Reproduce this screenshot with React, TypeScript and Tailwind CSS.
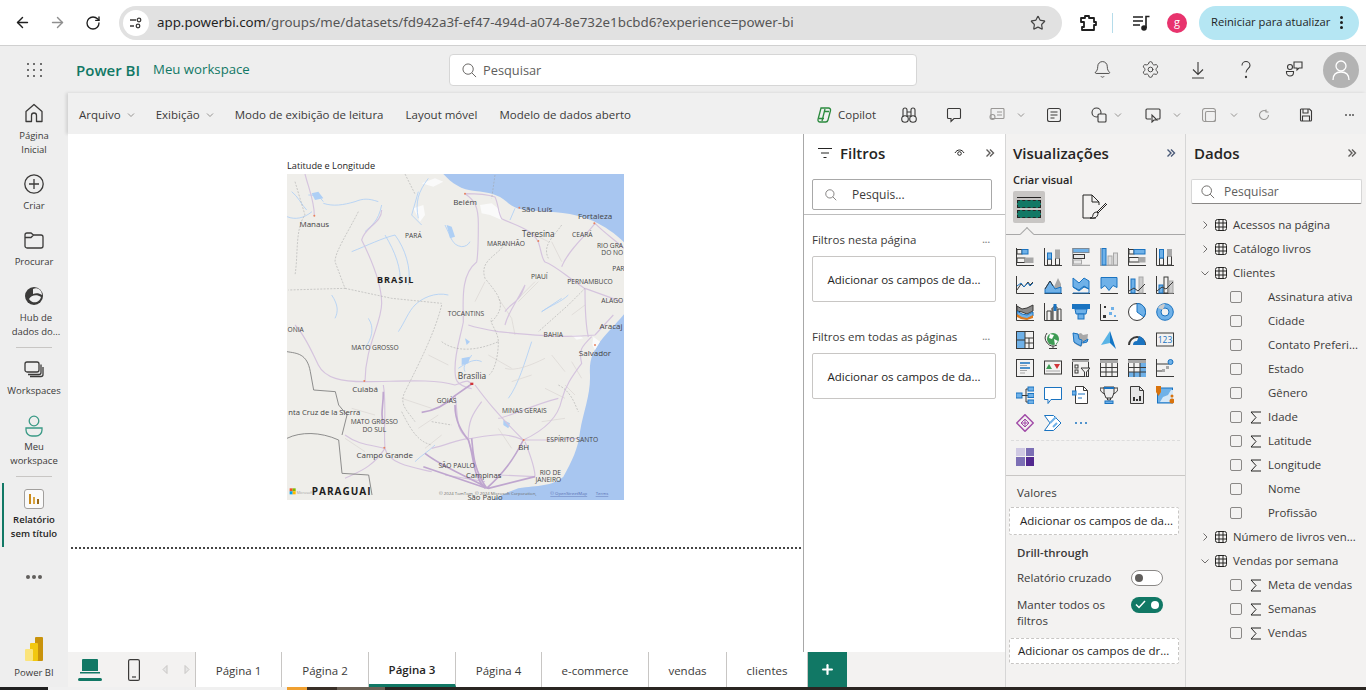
import type { ReactNode } from 'react';
import { ArrowLeft, ArrowRight, RotateCw, Star, Bell, Settings, Plus } from 'lucide-react';

const FONT = "[font-family:'Open_Sans','Noto_Sans',sans-serif]";
const B = '#1a73c0';
const L = '#6fb1e8';
const G = '#a8a8a8';
const D = '#3b3a39';

const Axis = () => <path d="M.5 0v17.5H18" fill="none" stroke={D} />;

function V({ children }: { children: ReactNode }) {
    return (
        <svg width="18" height="18" viewBox="0 0 18 18" fill="none" strokeWidth="1">
            {children}
        </svg>
    );
}

// visual gallery, row by row
const vizIcons: ReactNode[] = [
    <><Axis /><rect x="1" y="1.5" width="5" height="4.5" stroke={D} /><rect x="6" y="1.5" width="6" height="4.5" fill={L} stroke={B} /><rect x="1" y="10" width="8" height="4.5" stroke={D} /><rect x="9" y="10" width="8" height="4.5" fill={G} stroke={G} /></>,
    <><Axis /><rect x="3.5" y="11" width="4" height="6" stroke={D} /><rect x="3.5" y="5" width="4" height="6" fill={L} stroke={B} /><rect x="11.5" y="10" width="4" height="7" stroke={D} /><rect x="11.5" y="2" width="4" height="8" fill={G} stroke={G} /></>,
    <><path d="M.5 0v17.5H18" stroke={G} strokeWidth="1.5" /><rect x="1" y=".5" width="16" height="4" fill={L} stroke="#7d8a96" /><rect x="1.5" y="6.5" width="11" height="4" fill="#e8e8e8" stroke={D} /><rect x="1.5" y="12" width="8" height="4" fill="#e8e8e8" stroke={G} /></>,
    <><path d="M.5 0v17.5H18" stroke={G} strokeWidth="1.5" /><rect x="2" y=".5" width="4" height="16.5" fill={L} stroke={B} /><rect x="8" y="8" width="4" height="9" fill="#ddd" stroke={G} /><rect x="13.5" y="5" width="4" height="12" fill="#ddd" stroke={G} /></>,
    <><Axis /><rect x="1" y="1.5" width="5" height="4.5" stroke={D} /><rect x="6" y="1.5" width="11" height="4.5" fill={L} stroke={B} /><rect x="1" y="9.5" width="10" height="4.5" stroke={D} /><rect x="11" y="9.5" width="6" height="4.5" fill={G} stroke={G} /></>,
    <><Axis /><rect x="3.5" y="10" width="4" height="7" stroke={D} /><rect x="3.5" y="1.5" width="4" height="8.5" fill={L} stroke={B} /><rect x="11.5" y="8" width="4" height="9" stroke={D} /><rect x="11.5" y="1.5" width="4" height="6.5" fill={G} stroke={G} /></>,

    <><Axis /><path d="M1 14l4-6 3 3 4-5 2 3 3-3" stroke={D} /><path d="M1 10l4-3 3 4 4-4 2 3 3-3" stroke={B} /></>,
    <><path d="M.5 17.5H18" stroke={D} /><path d="M1 17l5-11 4 5 4-9 3 6v9z" fill={G} /><path d="M1 13l5-8 5 8 6-2v6H1z" fill={L} stroke={B} /><path d="M1 13l5-8 3 5" stroke={D} /></>,
    <><path d="M.5 17.5H18" stroke={D} /><path d="M1 2l6 5 5-5 5 3v8l-5-2-5 4-6-4z" fill={L} stroke={B} /><path d="M1 11l6 3 5-4 5 3v4H1" stroke={B} /></>,
    <><path d="M.5 17.5H18" stroke={D} /><path d="M1 1.5h16v10l-4-2-4 5-4-5-4 3z" fill={L} stroke={B} /></>,
    <><Axis /><rect x="3" y="3" width="4" height="14" fill={L} stroke={B} /><rect x="11" y="1" width="4" height="16" fill="#ccc" stroke={G} /><path d="M1 15l5-3 4 3 7-7" stroke={D} /></>,
    <><Axis /><rect x="3" y="9" width="4" height="8" fill={L} stroke={B} /><rect x="8" y="1" width="4" height="16" stroke={D} /><rect x="13" y="5" width="4" height="12" fill="#ccc" stroke={G} /><path d="M1 15l5-4 4 2 7-7" stroke={D} /></>,

    <><path d="M1 3l5 3 5-1 6-3v6l-6 3-5-2-5-1z" fill="#8a8a8a" stroke={D} /><path d="M1 8l5 3 5 1 6-3v4l-6 3-6-1-4-3z" fill={L} stroke={B} /><path d="M1 11l5 3 5 1 6-3v3l-6 2-6-1-4-2z" fill="#de7a1d" /><path d="M.5 1v16.5H18" stroke={D} /></>,
    <><path d="M.5 0v17.5H18" stroke={D} /><path d="M3 17V8h4v9M8 17V5h0M9 17V4h4v13M14 17V6h3v11" stroke={D} /><rect x="9.5" y="1" width="3" height="7" fill={B} /></>,
    <><path d="M0 1h18v5H0z" fill="#1a73c0" /><path d="M3 6h12l-1 5H4z" fill={L} stroke={B} /><rect x="6" y="11" width="6" height="5" fill={L} stroke={B} /></>,
    <><path d="M.5 1v16.5H18" stroke={D} /><rect x="3" y="12" width="3" height="3" fill="#333" /><rect x="9" y="9" width="3" height="3" fill={L} /><rect x="11" y="4" width="3" height="3" fill={L} /><rect x="14" y="12" width="2" height="2" fill={L} /><rect x="4" y="3" width="2" height="2" fill="#333" /></>,
    <><circle cx="9" cy="9" r="8.5" fill="#fff" stroke={D} /><path d="M9 .5A8.5 8.5 0 0 1 16 14L9 9z" fill={L} stroke={B} /></>,
    <><circle cx="9" cy="9" r="8.3" fill={L} stroke={B} /><circle cx="9" cy="9" r="4" fill="#f3f2f1" stroke={B} /><path d="M9 1a8 8 0 0 0-7 4l5 2" fill="#ccc" /></>,

    <><rect x=".5" y=".5" width="17" height="17" stroke={D} /><rect x="1" y="1" width="8" height="16" fill={L} /><path d="M9 .5v17M9 7h9M13 7v11M9 12h9M1 9h8" stroke={D} /></>,
    <><circle cx="9" cy="8" r="6" fill="#3e9b54" /><path d="M6 3l4 1-2 4-3-1zM10 8l4 2-3 4z" fill="#fff" /><path d="M3 2a8 8 0 0 0 10 12M9 15v2M5 17.5h8" stroke={D} /></>,
    <><path d="M1 2l5 1 3-1 2 2 5-1-1 8-4 1-2 4-4-2-3-2z" fill={G} /><path d="M1 2l5 1 1 5 3 1-1 6-4-2-3-2z" fill={L} stroke={B} /><path d="M11 11l5-3-1 3-4 1z" fill={L} stroke={B} /></>,
    <><path d="M10 0l6 18-6-6z" fill="#1477c6" /><path d="M10 0L1 14l9-2z" fill="#5ab4e6" /></>,
    <><path d="M1 14a8 8 0 0 1 16 0" stroke={D} strokeWidth="2" /><path d="M5 14a4 4 0 0 1 4-4l2-5a8 8 0 0 1 6 9" fill={B} /></>,
    <><rect x=".5" y="2" width="17" height="13" stroke={D} /><text x="9" y="12" textAnchor="middle" fontSize="8.5" fontFamily="'Open Sans',sans-serif" fill={B}>123</text></>,

    <><rect x=".5" y=".5" width="17" height="17" stroke={D} /><path d="M4 4h10M4 9h10" stroke={B} strokeWidth="1.5" /><path d="M4 6.5h7M4 11.5h7M4 14h5" stroke={G} /></>,
    <><rect x=".5" y="2" width="17" height="13" stroke={D} /><path d="M5 5l3 5H2z" fill="#3e9b54" /><path d="M10 5h6l-3 5z" fill="#d13438" /><path d="M2 12h14" stroke={G} /></>,
    <><rect x=".5" y=".5" width="16" height="17" stroke={D} /><path d="M0 1h17v2H0z" fill={G} /><rect x="3" y="6" width="3" height="3" stroke={D} /><rect x="3" y="11" width="3" height="3" stroke={D} /><path d="M9 9h9l-3.5 4v5h-2v-5z" fill="#f3f2f1" stroke={D} /></>,
    <><rect x=".5" y=".5" width="17" height="17" stroke={D} /><path d="M0 1h18v3H0z" fill={G} /><path d="M6 4v14M12 4v14M1 8.5h17M1 13h17" stroke={D} /></>,
    <><rect x=".5" y=".5" width="17" height="17" stroke={D} /><path d="M0 1h18v3H0z" fill={G} /><rect x="12" y="4" width="6" height="14" fill={L} /><rect x="1" y="13" width="17" height="5" fill={L} /><path d="M6 4v14M12 4v14M1 8.5h17M1 13h17" stroke={D} /></>,
    <><path d="M.5 0v18M.5 5H13M.5 12H9M.5 17.5H18" stroke={D} /><circle cx="14.5" cy="3" r="2.5" fill={L} stroke={B} /><rect x="10" y="7" width="3" height="3" fill={G} /><rect x="6" y="10" width="3" height="3" fill={G} /></>,

    <><rect x="0" y="7" width="6" height="5" fill={L} stroke={B} /><path d="M6 9.5h4M10 3v13M10 3h2M10 9.5h2M10 16h2" stroke={D} /><rect x="12" y="1" width="6" height="4" fill={L} stroke={B} /><rect x="12" y="7.5" width="6" height="4" fill={L} stroke={B} /><rect x="12" y="14" width="6" height="4" fill={L} stroke={B} /></>,
    <><path d="M.5 1.500h17v12H7l-3 4v-4H.5z" fill="#fff" stroke={B} /></>,
    <><path d="M3.500.5h8l4 4v13h-12z" fill="#fff" stroke={D} /><path d="M11.500.5v4h4" stroke={D} /><rect x="0" y="5" width="4" height="4" fill={L} stroke={B} /><path d="M6 8h7" stroke={B} /><path d="M6 12h4" stroke={B} /></>,
    <><path d="M4 1h10v6l-2 5H6L4 7z" fill="#eee" stroke={D} /><path d="M4 2H0c0 3 2 5 5 6M14 2h4c0 3-2 5-5 6" stroke={D} /><path d="M4 1h10v2H4z" fill={B} /><path d="M7.500 12v2h3v-2" stroke={D} /><rect x="5" y="15" width="8" height="2.500" fill={L} stroke={B} /></>,
    <><path d="M2.500.5h9l4 4v13h-13z" fill="#e6e6e6" stroke={D} /><path d="M11.500.5v4h4" stroke={D} /><path d="M5 11h2v4H5zM8 13h2v2H8zM11 10h2v5h-2z" fill="#333" /></>,
    <><rect x="1.500" y="2" width="15" height="15" fill={L} stroke={B} /><path d="M4 16l3-5 5-2 3-5h2v12z" fill="#d4e7f7" /><path d="M0 0h5v6l-2.500 4L0 6z" fill="#d9730d" /><circle cx="16" cy="10" r="1.500" fill="#d9730d" /><circle cx="16" cy="15" r="2.500" fill="#d9730d" /></>,

    <><path d="M9 .7L17.300 9 9 17.300.7 9z" fill="none" stroke="#a14ba8" strokeWidth="1.500" /><path d="M5 9l4-4 4 4-4 4zM9 5v8M5 9h8" stroke="#a14ba8" /></>,
    <><path d="M.5 1.500h9l7.500 7.500-7.500 7.500h-9L6 9z" fill="#fff" stroke={B} /><path d="M6 9l6-6M9 13l4-4" stroke={L} strokeWidth="2" /></>,
    <><circle cx="4" cy="9" r="1" fill={B} /><circle cx="9" cy="9" r="1" fill={B} /><circle cx="14" cy="9" r="1" fill={B} /></>,
];

function Chevrons({ color = '#605e5c' }: { color?: string }) {
    return (
        <svg width="10" height="10" viewBox="0 0 10 10" fill="none" stroke={color} strokeWidth="1.400">
            <path d="M1.500 1.500L5 5 1.500 8.500M5 1.500L8.500 5 5 8.500" />
        </svg>
    );
}

function Caret({ className = '' }: { className?: string }) {
    return (
        <svg width="8" height="8" viewBox="0 0 8 8" fill="none" stroke="#8a8886" strokeWidth="0.900" className={className}>
            <path d="M1 2.500L4 5.500 7 2.500" />
        </svg>
    );
}

function SearchGlyph({ size = 16 }: { size?: number }) {
    return (
        <svg width={size} height={size} viewBox="0 0 16 16" fill="none" stroke="#605e5c" strokeWidth="1">
            <circle cx="6.500" cy="6.500" r="5.500" />
            <path d="M10.500 10.500L15 15" />
        </svg>
    );
}

function TableGlyph() {
    return (
        <svg width="12" height="12" viewBox="0 0 12 12" fill="none" stroke="#252423" strokeWidth="1">
            <rect x=".5" y=".5" width="11" height="11" rx="2" />
            <path d="M4 .5v11M8 .5v11M.5 4h11M.5 8h11" />
        </svg>
    );
}

function SigmaGlyph() {
    return (
        <svg width="12" height="13" viewBox="0 0 12 13" fill="none" stroke="#252423" strokeWidth="1">
            <path d="M11 1H1l5 5.500L1 12h10" />
        </svg>
    );
}

function RailItem({ icon, lines, active, h, labelClass = 'mt-[3px]' }: { icon: ReactNode; lines: string[]; active?: boolean; h: number; labelClass?: string }) {
    return (
        <div
            className={`relative flex flex-col items-center ${active ? 'font-semibold text-[#252423]' : 'text-[#3b3a39]'}`}
            style={{ height: h }}
        >
            {active && <div className="absolute left-[2px] top-[-4px] bottom-[7px] w-[2px] bg-[#117865]" />}
            <div className="flex h-[24px] items-center justify-center">{icon}</div>
            <div className={`text-center text-[9.500px] leading-[14px] ${labelClass}`}>
                {lines.map((l) => (
                    <div key={l} className="whitespace-nowrap">{l}</div>
                ))}
            </div>
        </div>
    );
}

function LeftRail() {
    const s = { fill: 'none', stroke: '#3b3a39', strokeWidth: 1.300 };
    return (
        <div className="flex w-[68px] shrink-0 flex-col bg-[#eeeeee] pt-[8px]">
            <RailItem h={71} labelClass="mt-[4px]" lines={['Página', 'Inicial']} icon={
                <svg width="20" height="20" viewBox="0 0 20 20" {...s}><path d="M2 8.500L10 1.500l8 7v10h-5.500v-6a2.500 2.500 0 0 0-5 0v6H2z" strokeLinejoin="round" /></svg>
            } />
            <RailItem h={56} lines={['Criar']} icon={
                <svg width="20" height="20" viewBox="0 0 20 20" {...s}><circle cx="10" cy="10" r="9.200" /><path d="M10 5v10M5 10h10" /></svg>
            } />
            <RailItem h={56} lines={['Procurar']} icon={
                <svg width="20" height="20" viewBox="0 0 20 20" {...s}><path d="M1 5a2 2 0 0 1 2-2h4l2.500 2H17a2 2 0 0 1 2 2v9a2 2 0 0 1-2 2H3a2 2 0 0 1-2-2zM1 7.500h6L9.500 5" /></svg>
            } />
            <RailItem h={63} labelClass="mt-[3px] pl-[4px]" lines={['Hub de', 'dados do...']} icon={
                <svg width="20" height="20" viewBox="0 0 20 20"><circle cx="10" cy="10" r="9" fill="#3b3a39" /><path d="M9 3c4-2 9 1 9 6-3-2-6-2-9-1zM5 13c2-4 8-5 12-2-1 5-8 8-12 2z" fill="#eeeeee" /></svg>
            } />
            <div className="mx-auto mb-[9px] h-px w-[36px] bg-[#c8c6c4]" />
            <RailItem h={57} lines={['Workspaces']} icon={
                <svg width="20" height="20" viewBox="0 0 20 20" {...s}><rect x="1" y="3" width="14" height="10" rx="2" /><path d="M17 5.500v8a2 2 0 0 1-2 2H4M19 8v7.500a2 2 0 0 1-2 2H6" /></svg>
            } />
            <RailItem h={62} labelClass="mt-[2px]" lines={['Meu', 'workspace']} icon={
                <svg width="18" height="22" viewBox="0 0 18 22" fill="none" stroke="#3a9a86" strokeWidth="1.300"><circle cx="9" cy="6" r="4.800" /><path d="M1 13h16v2a6 6 0 0 1-6 6H7a6 6 0 0 1-6-6z" /></svg>
            } />
            <div className="mx-auto mb-[10px] h-px w-[36px] bg-[#c8c6c4]" />
            <RailItem h={67} active labelClass="mt-[2px]" lines={['Relatório', 'sem título']} icon={
                <svg width="20" height="20" viewBox="0 0 20 20"><rect x=".5" y=".5" width="19" height="19" rx="2.500" fill="#fafafa" stroke="#a19f9d" /><path d="M5 5h2v10H5z" fill="#c98a1a" /><path d="M9 8h2v7H9z" fill="#d9a441" /><path d="M13 10h2v5h-2z" fill="#9a6a15" /></svg>
            } />
            <div className="mt-[21px] flex justify-center gap-[2px]">
                <span className="h-[4px] w-[4px] rounded-full bg-[#605e5c]" />
                <span className="h-[4px] w-[4px] rounded-full bg-[#605e5c]" />
                <span className="h-[4px] w-[4px] rounded-full bg-[#605e5c]" />
            </div>
            <div className="mt-auto flex flex-col items-center pb-[7px]">
                <svg width="18" height="24" viewBox="0 0 18 24">
                    <rect x="10" y="0" width="8" height="24" rx="1" fill="#c9930c" />
                    <rect x="5" y="6" width="8" height="18" rx="1" fill="#f2c811" />
                    <rect x="0" y="12" width="8" height="12" rx="1" fill="#fbe47c" />
                </svg>
                <span className="mt-[5px] text-[9.500px] leading-[14px] text-[#3b3a39]">Power BI</span>
            </div>
        </div>
    );
}

function ChromeBar() {
    return (
        <div className="flex h-[46px] shrink-0 items-center border-b border-[#d0d0d0] bg-white">
            <ArrowLeft size={17} strokeWidth={2} className="ml-[14px] text-[#1f1f1f]" />
            <ArrowRight size={17} strokeWidth={2} className="ml-[18px] text-[#8f8f8f]" />
            <RotateCw size={16} strokeWidth={2} className="ml-[19px] text-[#1f1f1f]" />
            <div className="ml-[18px] flex h-[34px] w-[943px] shrink-0 items-center rounded-full bg-[#e1e1e1]">
                <div className="ml-[4px] flex h-[26px] w-[26px] items-center justify-center rounded-full bg-white">
                    <svg width="14" height="14" viewBox="0 0 14 14" fill="none" stroke="#3b3a39" strokeWidth="1.300">
                        <path d="M1 4h6M1 10h4" />
                        <circle cx="10" cy="4" r="1.800" />
                        <circle cx="9" cy="10" r="1.800" />
                    </svg>
                </div>
                <span className="ml-[8px] whitespace-nowrap text-[13.330px] text-[#555] [font-family:'Noto_Sans',sans-serif]">
                    <span className="text-[#1f1f1f]">app.powerbi.com</span>/groups/me/datasets/fd942a3f-ef47-494d-a074-8e732e1bcbd6?experience=power-bi
                </span>
                <Star size={16} strokeWidth={1.800} className="ml-auto mr-[16px] text-[#444]" />
            </div>
            <svg width="18" height="18" viewBox="0 0 18 18" fill="none" stroke="#1f1f1f" strokeWidth="1.800" className="ml-[17px]">
                <path d="M2 4h4V2h4v2h5v4h2v3h-2v5H3v-3h2V8H2z" strokeLinejoin="round" />
            </svg>
            <div className="ml-[15px] h-[20px] w-px bg-[#b5dcea]" />
            <svg width="17" height="16" viewBox="0 0 17 16" fill="none" stroke="#1f1f1f" strokeWidth="1.600" className="ml-[20px]">
                <path d="M0 2h10M0 6h10M0 10h7" />
                <path d="M13 13V1.500h3.500" />
                <circle cx="11" cy="13" r="2" fill="#1f1f1f" />
            </svg>
            <div className="ml-[17px] flex h-[20px] w-[20px] items-center justify-center rounded-full bg-[#e8336d] text-[11px] text-white">g</div>
            <div className="ml-[12px] flex h-[34px] w-[160px] items-center rounded-full bg-[#b5e6f3] pl-[12px]">
                <span className="whitespace-nowrap text-[11.200px] text-[#1f1f1f]">Reiniciar para atualizar</span>
                <span className="ml-[10px] flex flex-col gap-[2px]">
                    <i className="h-[3px] w-[3px] rounded-full bg-[#1f1f1f]" />
                    <i className="h-[3px] w-[3px] rounded-full bg-[#1f1f1f]" />
                    <i className="h-[3px] w-[3px] rounded-full bg-[#1f1f1f]" />
                </span>
            </div>
        </div>
    );
}

function AppHeader() {
    return (
        <div className="flex h-[47px] shrink-0 items-center bg-[#eeeeee]">
            <div className="ml-[27px] grid w-[15px] grid-cols-3 gap-[4px]">
                {Array.from({ length: 9 }).map((_, i) => (
                    <span key={i} className="h-[2px] w-[2px] rounded-full bg-[#444]" />
                ))}
            </div>
            <span className="ml-[34px] pt-[1px] text-[15px] font-semibold text-[#117865]">Power BI</span>
            <span className="ml-[13px] pt-[1px] text-[13.200px] text-[#117865]">Meu workspace</span>
            <div className="absolute left-[449px] top-[54px] flex h-[32px] w-[468px] items-center rounded-[4px] border border-[#d6d6d6] bg-white pl-[12px]">
                <SearchGlyph size={15} />
                <span className="ml-[6px] pt-[1px] text-[12.800px] text-[#605e5c]">Pesquisar</span>
            </div>
            <div className="ml-auto flex items-center text-[#3b3a39]">
                <Bell size={19} strokeWidth={1.100} />
                <Settings size={19} strokeWidth={1.100} className="ml-[29px]" />
                <svg width="18" height="18" viewBox="0 0 18 18" fill="none" stroke="#3b3a39" strokeWidth="1.100" className="ml-[29px]"><path d="M9 1v12M4 8.500L9 13.500l5-5M3 17h12" /></svg>
                <svg width="18" height="20" viewBox="0 0 18 20" fill="none" stroke="#3b3a39" strokeWidth="1.100" className="ml-[30px]"><path d="M5 5.500C5 3 7 1.500 9 1.500s4 1.500 4 4c0 3-4 3.500-4 7" /><circle cx="9" cy="17" r=".6" /></svg>
                <svg width="18" height="18" viewBox="0 0 18 18" fill="none" stroke="#3b3a39" strokeWidth="1.100" className="ml-[30px]"><circle cx="5" cy="6" r="2.500" /><path d="M1.500 10.500h7v1a3.500 3.500 0 0 1-7 0zM9 1h8v6h-3l-2 2V7H9z" /></svg>
                <div className="ml-[20px] mr-[7px] flex h-[36px] w-[36px] items-center justify-center rounded-full bg-[#b3b3b3]">
                    <svg width="18" height="22" viewBox="0 0 18 22" fill="none" stroke="#fff" strokeWidth="1.300"><circle cx="9" cy="7" r="5" /><path d="M1 21c0-5 3-8 8-8s8 3 8 8" /></svg>
                </div>
            </div>
        </div>
    );
}

function Toolbar() {
    const ic = { fill: 'none', stroke: '#3b3a39', strokeWidth: 1.100 };
    const gray = { fill: 'none', stroke: '#9a9896', strokeWidth: 1.100 };
    return (
        <div className="flex h-[41px] shrink-0 items-center bg-[#f0f0f0] pl-[11px] pt-[2px] text-[11.500px] text-[#3b3a39] shadow-[-2px_0_3px_rgba(0,0,0,0.12)]">
            <span>Arquivo</span>
            <Caret className="ml-[6px]" />
            <span className="ml-[21px]">Exibição</span>
            <Caret className="ml-[6px]" />
            <span className="ml-[21px]">Modo de exibição de leitura</span>
            <span className="ml-[22px]">Layout móvel</span>
            <span className="ml-[22px]">Modelo de dados aberto</span>
            <div className="ml-auto flex items-center pr-[12px]">
                <svg width="18" height="18" viewBox="0 0 18 18" fill="none" stroke="#2b8a3e" strokeWidth="1.300"><path d="M6 2h7.500a2 2 0 0 1 2 2.500L13 14a2.500 2.500 0 0 1-2.500 2H5a2 2 0 0 1-2-2.500L5.500 4z" /><path d="M9 5.500h5M4 12.500h5M10 3L7 15" /></svg>
                <span className="ml-[5px]">Copilot</span>
                <svg width="16" height="18" viewBox="0 0 16 18" {...ic} className="ml-[25px]"><path d="M2 11V4a2 2 0 0 1 4 0v7M10 11V4a2 2 0 0 1 4 0v7M6 6h4M6 10h4" /><circle cx="4" cy="13" r="3.300" /><circle cx="12" cy="13" r="3.300" /></svg>
                <svg width="16" height="16" viewBox="0 0 16 16" {...ic} className="ml-[29px]"><path d="M2.500 1.500h11a1 1 0 0 1 1 1v8a1 1 0 0 1-1 1H8L5 14.500v-3H2.500a1 1 0 0 1-1-1v-8a1 1 0 0 1 1-1z" /></svg>
                <svg width="16" height="14" viewBox="0 0 16 14" {...gray} className="ml-[27px]"><rect x="2" y=".5" width="13" height="10" rx="1" /><path d="M8 4h5M8 7h5" /><circle cx="3.500" cy="9" r="2.500" /></svg>
                <Caret className="ml-[12px]" />
                <svg width="14" height="16" viewBox="0 0 14 16" {...ic} className="ml-[22px]"><rect x=".5" y="1.500" width="13" height="13" rx="2" /><path d="M3.500 5h7M3.500 8h7M3.500 11h4" /></svg>
                <svg width="16" height="16" viewBox="0 0 16 16" {...ic} className="ml-[30px]"><circle cx="5.500" cy="5.500" r="4.500" /><rect x="7" y="7" width="8" height="8" rx="1" fill="#f0f0f0" /></svg>
                <Caret className="ml-[7px]" />
                <svg width="16" height="16" viewBox="0 0 16 16" {...ic} className="ml-[23px]"><path d="M6 12H2a1 1 0 0 1-1-1V3a1 1 0 0 1 1-1h12a1 1 0 0 1 1 1v8a1 1 0 0 1-1 1h-2" /><path d="M7 8v7l2-2h3z" /></svg>
                <Caret className="ml-[12px]" />
                <svg width="14" height="14" viewBox="0 0 14 14" {...gray} className="ml-[21px]"><rect x=".5" y=".5" width="13" height="13" rx="2.500" /><rect x="3.500" y="3.500" width="10" height="10" rx="1.500" /></svg>
                <Caret className="ml-[14px]" />
                <svg width="12" height="12" viewBox="0 0 12 12" {...gray} className="ml-[20px]"><path d="M10.500 6A4.500 4.500 0 1 1 8 2M8 .5V3h2.500" /></svg>
                <svg width="14" height="14" viewBox="0 0 14 14" {...ic} className="ml-[29px]"><path d="M1.500 1.500a1 1 0 0 1 1-.5h8l2 2v9a1 1 0 0 1-1 1h-9a1 1 0 0 1-1-1zM4 1v4h5V1M3.500 13V8h7v5" /></svg>
                <span className="ml-[32px] flex gap-[1.500px]">
                    <i className="h-[2px] w-[2px] rounded-full bg-[#555]" />
                    <i className="h-[2px] w-[2px] rounded-full bg-[#555]" />
                    <i className="h-[2px] w-[2px] rounded-full bg-[#555]" />
                </span>
            </div>
        </div>
    );
}

// map tile: labels stay real text, the rest is drawn
function MapVisual() {
    const road = { fill: 'none', stroke: '#d5c4de', strokeWidth: 3.500, strokeLinejoin: 'round' as const };
    const major = { fill: 'none', stroke: '#bfa6cf', strokeWidth: 5, strokeLinejoin: 'round' as const };
    const minor = { fill: 'none', stroke: '#d9d4d2', strokeWidth: 2 };
    const river = { fill: 'none', stroke: '#aecff5', strokeWidth: 2.500 };
    const state = { fill: 'none', stroke: '#a0a0a0', strokeWidth: 1.500, strokeDasharray: '6 4' };
    const labels: [number, number, string, number][] = [
        [540, 150, 'Belém', 24], [756, 170, 'São Luís', 24], [930, 192, 'Fortaleza', 24], [88, 215, 'Manaus', 24],
        [385, 250, 'PARÁ', 20], [760, 246, 'Teresina', 24.500], [892, 247, 'CEARÁ', 20], [663, 274, 'MARANHÃO', 20],
        [975, 280, 'RIO GRA', 20], [982, 300, 'DO NO', 20], [1000, 347, 'PAR', 20], [763, 371, 'PIAUÍ', 20],
        [915, 388, 'PERNAMBUCO', 20], [982, 443, 'ALAGO', 20], [543, 482, 'TOCANTINS', 20], [978, 521, 'Aracaj', 24],
        [805, 545, 'BAHIA', 20], [32, 532, 'ONIA', 20], [270, 584, 'MATO GROSSO', 20], [930, 603, 'Salvador', 24],
        [561, 673, 'Brasília', 25], [240, 710, 'Cuiabá', 24], [485, 743, 'GOIÁS', 20], [718, 773, 'MINAS GERAIS', 20],
        [118, 779, 'nta Cruz de la Sierra', 23], [268, 808, 'MATO GROSSO', 20], [268, 830, 'DO SUL', 20], [862, 860, 'ESPÍRITO SANTO', 20],
        [716, 885, 'BH', 24], [299, 910, 'Campo Grande', 24], [515, 938, 'SÃO PAULO', 20], [596, 968, 'Campinas', 23],
        [796, 961, 'RIO DE', 20], [790, 982, 'JANEIRO', 20], [600, 1034, 'São Paulo', 23],
    ];
    return (
        <svg width="337" height="326" viewBox="6 57 1011 978" className="block" fontFamily="'Open Sans',sans-serif">
            <rect x="6" y="57" width="1011" height="978" fill="#efeeea" />
            <path d="M475 57C500 85 530 105 570 108C610 112 640 118 665 140C690 165 720 165 760 168C800 172 860 170 925 198C960 215 990 235 1017 262V478C990 510 965 535 945 560C925 590 912 610 915 660C917 720 895 770 885 830C880 880 860 920 835 965C800 995 760 990 700 1000C670 1010 640 1025 620 1035H1017V57Z" fill="#a8c6f0" />
            <path d="M585 150l35-5 25 20 5 30-35-15-25-5zM385 160l30-10 5 30-15 20zM410 85l40-15 25 10-30 15zM860 540l25 2 10 8-20 4zM925 545l20 15-15 25-8-15z" fill="#fafafa" />
            {/* rivers and lakes */}
            <path d="M6 185c25 10 50 5 75-15M20 110c20 15 30 40 45 55M70 120c20 0 35 5 45 20M115 145c30 10 60 5 95-5 25-10 40-10 70 0M290 150c-10 50-30 60-50 80M430 70c-30 40-40 70-30 120M400 110l-20 70 30 30M480 210c20 40 20 60 50 65 10 0 20-5 25-15M200 290c50-20 90-40 130-50 30 40 50 100 40 150M300 240c30 50 50 100 45 150M340 530c20-30 30-60 50-80 20-20 60-40 100-30M770 470c30-20 60-30 80-50M740 560c-20 60-40 130-70 170M520 640c30-20 50-30 70-20M140 420c20 30 20 50 10 70M250 490c20 30 10 60-10 90M690 160l-15 35M830 430l-60 40M660 800l15 15M450 870c-20 20-40 30-60 50M560 600c-10 20-30 30-20 50" {...river} />
            <path d="M80 115l20-5 15 20-25 5zM485 210l15 5 10 30-15 5zM540 550l15 10-10 10zM530 610l25-5-5 20-20 5zM655 795l20 10-5 15-15-10z" fill="#aecff5" />
            {/* back roads */}
            <path d="M640 430l40 60 10 50M700 430l50-50M600 380l-30 60M660 640c30 10 80-10 120-30M800 600l40 50M780 700l60 30M840 690l30 30M430 600l60 30M350 730l90 30M420 880l50-40M640 820l40 60M760 380l-60 60M860 480l40-30M800 260l30 60M180 850l60 40M200 760l70 20M730 230l60 30M610 600l70 40M680 680l60-20M860 620l30 50M770 800l70-10M400 820l60-40" {...minor} />
            <path d="M60 57c10 40 28 80 28 125M290 165c0 40-50 50-60 90 30 60 60 130 60 190 0 60-50 130-50 235-70 0-120-10-140-50-20-40-40-90-70-120M240 680c100 0 200-10 270 10 30-10 40-20 50 0M540 116c30 20 40 40 40 90 0 50 0 90-5 115-50 40-40 120-40 180-10 50-25 90-25 140 0 30 0 50 50 60M640 530c110 10 190 20 290 10M550 510c30 10 60 15 90 20M570 690c30 40 60 80 145 165M920 545c-30 30-40 40-30 80-30 40-50 70-60 110-10 50-50 90-115 120M540 116c30 0 60 0 90 10 10 20 10 50 20 65 40 20 90 30 110 70 10 30 10 50 20 60 30 10 60 40 120 80 0 50 0 100 10 145M930 205c-30 40-80 80-100 130M930 205c30 30 60 50 87 75M900 400l110 40M985 480l-55 60M715 855h100c30-5 50-5 65-5M720 860c20 50 30 80 30 105M295 690c10 60 0 130 5 190 10 50 100 60 140 70M180 840c40 30 80 30 120 40M300 880c-40 60-80 70-120 90M510 720c10 60 0 110 40 130 10 50 30 100 40 140M560 850c60-10 100-20 155 5M440 880c50-10 80-30 120-30M660 510c10-40 30-60 60-120M590 740c-30 40-40 60-40 110M640 790c50-10 100-40 180-60M640 960l110 5M480 960l120 20M720 390c-20 60-40 50-60 80" {...road} />
            <path d="M410 772c40-5 70-20 100-50l50-35M510 750c0 50 20 80 40 105 20 60 10 100 50 145M715 855c-30 60-60 100-110 145M420 895c50 40 130 70 190 105l140-35M605 1000l-190-65M295 710c0 50-10 70 0 95M560 850c5 50 5 90 45 150" {...major} />
            <path d="M360 57l30 60M30 80l30 100c-30 40-20 120-30 180M220 170c-30 60-70 120-70 150l30 80-170 5M180 400l140 30 150 15M470 450c-20 80-60 160-110 260-20 40 10 60 30 90M470 560c40 30 100 30 170 0 0-30-30-60-20-70M620 500c50-50 20-80-20-130-20-60 50-70 60-110M830 210c-20 30-60 60-40 100M900 400l-50 50-90 80M820 690c40 20 50 60 60 80M440 800l60 10M640 560c0 60-20 100-30 100M350 770c30 60 50 90 90 100M630 60l-10 70" {...state} />
            <path d="M6 590c30 5 60 5 70 60l10 55 65 5 10 40 25 30-15 60M6 850c40-20 100-20 155 5l10 100 80 5 10 60" fill="none" stroke="#7a7a7a" strokeWidth="2.500" />
            {[[88, 182], [540, 116], [703, 158], [928, 205], [760, 258], [930, 570], [238, 678], [298, 878], [716, 855]].map(([x, y]) => (
                <circle key={`${x}-${y}`} cx={x} cy={y} r="3" fill="#e8825f" />
            ))}
            <rect x="556" y="683" width="9" height="7" fill="#d13438" />
            {labels.map(([x, y, t, s]) => (
                <text key={t} x={x} y={y} fontSize={s} textAnchor="middle" fill="#444">{t}</text>
            ))}
            <text x="332" y="384" fontSize="27" fontWeight="700" textAnchor="middle" letterSpacing="3" fill="#1c1c1c">BRASIL</text>
            <text x="170" y="1021" fontSize="30" fontWeight="700" textAnchor="middle" letterSpacing="3" fill="#1c1c1c">PARAGUAI</text>
            <rect x="14" y="1000" width="9" height="9" fill="#f25022" />
            <rect x="23" y="1000" width="9" height="9" fill="#7fba00" />
            <rect x="14" y="1009" width="9" height="9" fill="#00a4ef" />
            <rect x="23" y="1009" width="9" height="9" fill="#ffb900" />
            <text x="35" y="1018" fontSize="11" fill="#a0a0a0">Microsoft</text>
            <text x="462" y="1020" fontSize="13" fill="#6b6b6b">© 2024 TomTom, © 2024 Microsoft Corporation, </text>
            <text x="796" y="1020" fontSize="13" fill="#5a6fb0" textDecoration="underline">© OpenStreetMap</text>
            <text x="932" y="1020" fontSize="13" fill="#5a6fb0" textDecoration="underline">Terms</text>
        </svg>
    );
}

function Toggle({ on }: { on?: boolean }) {
    return on ? (
        <div className="flex h-[16px] w-[32px] shrink-0 items-center justify-between rounded-full bg-[#117865] px-[4px]">
            <svg width="11" height="9" viewBox="0 0 11 9" fill="none" stroke="#fff" strokeWidth="1.500"><path d="M1 4.500L4 7.500 10 1" /></svg>
            <span className="h-[8px] w-[8px] rounded-full bg-white" />
        </div>
    ) : (
        <div className="flex h-[16px] w-[32px] shrink-0 items-center rounded-full border border-[#8a8886] bg-white px-[3px]">
            <span className="h-[8px] w-[8px] rounded-full bg-[#605e5c]" />
        </div>
    );
}

function FilterPane() {
    return (
        <div className="flex w-[202px] shrink-0 flex-col border-l border-[#a8a8a8] bg-white text-[#252423]">
            <div className="flex h-[38px] shrink-0 items-center">
                <svg width="14" height="12" viewBox="0 0 14 12" fill="none" stroke="#252423" strokeWidth="1.200" className="ml-[14px]"><path d="M0 1.500h14M3 6h8M5.500 10.500h3" /></svg>
                <span className="ml-[8px] text-[15px] font-semibold">Filtros</span>
                <svg width="11" height="8" viewBox="0 0 11 8" fill="none" stroke="#252423" className="ml-auto"><path d="M1 4c2-4 7-4 9 0" /><circle cx="5.500" cy="4.500" r="1.800" /></svg>
                <span className="ml-[20px] mr-[10px]"><Chevrons /></span>
            </div>
            <div className="mx-[8px] mt-[7px] flex h-[31px] w-[180px] items-center rounded-[2px] border border-[#a8a8a8] pl-[12px]">
                <SearchGlyph size={12} />
                <span className="ml-[15px] text-[12px] text-[#3b3a39]">Pesquis...</span>
            </div>
            <div className="mt-[4px] h-px bg-[#bdbdbd]" />
            <div className="mx-[8px] mt-[17px] flex items-center justify-between pr-[7px] text-[11.500px] leading-[16px] text-[#3b3a39]">
                <span>Filtros nesta página</span>
                <span className="text-[9px] font-bold text-[#888]">...</span>
            </div>
            <div className="mx-[8px] mt-[8px] flex h-[46px] w-[184px] items-center justify-center rounded-[2px] border border-[#c8c6c4] pt-[2px] text-[11.500px]">
                Adicionar os campos de da...
            </div>
            <div className="mx-[8px] mt-[27px] flex items-center justify-between pr-[7px] text-[11.500px] leading-[16px] text-[#3b3a39]">
                <span>Filtros em todas as páginas</span>
                <span className="text-[9px] font-bold text-[#888]">...</span>
            </div>
            <div className="mx-[8px] mt-[8px] flex h-[46px] w-[184px] items-center justify-center rounded-[2px] border border-[#c8c6c4] pt-[2px] text-[11.500px]">
                Adicionar os campos de da...
            </div>
        </div>
    );
}

function VizPane() {
    return (
        <div className="flex w-[180px] shrink-0 flex-col border-l border-[#d6d6d6] bg-[#f3f2f1] text-[#252423]">
            <div className="flex h-[38px] shrink-0 items-center pl-[7px]">
                <span className="text-[15px] font-semibold">Visualizações</span>
                <span className="ml-auto mr-[9px]"><Chevrons color="#4a5a78" /></span>
            </div>
            <div className="pl-[7px] text-[11px] font-semibold leading-[16px]">Criar visual</div>
            <div className="relative ml-[7px] mt-[3px] flex items-center">
                <div className="flex h-[32px] w-[32px] flex-col items-center justify-center gap-[2px] rounded-[2px] bg-[#c8c6c4]">
                    <div className="h-px w-[24px] bg-[#252423]" />
                    <div className="h-[8px] w-[24px] border border-dashed border-[#252423] bg-[#117865]" />
                    <div className="h-[8px] w-[24px] border border-dashed border-[#252423] bg-[#117865]" />
                </div>
                <svg width="26" height="26" viewBox="0 0 26 26" fill="none" stroke="#252423" strokeWidth="1" className="ml-[37px]">
                    <path d="M14 24H1V1h9l7 7v3M10 1v7h7" />
                    <path d="M24 9L15 18M25 10L16 19" />
                    <path d="M15 18c-3 0-4 2-4 3 0 2-2 3-3 3 3 1 8 0 8-5z" />
                </svg>
            </div>
            <div className="relative mt-[11px] h-px bg-[#a8a8a8]">
                <div className="absolute left-[16px] top-[-5px] h-[10px] w-[10px] rotate-45 border-l border-t border-[#a8a8a8] bg-[#f3f2f1]" />
            </div>
            <div className="ml-[10px] mt-[13px] grid w-[158px] grid-cols-[repeat(6,18px)] gap-x-[10px] gap-y-[9.650px]">
                {vizIcons.map((icon, i) => (
                    <V key={i}>{icon}</V>
                ))}
            </div>
            <div className="mx-[5px] mt-[8px] border-t border-dashed border-[#dcdcdc]" />
            <div className="ml-[10px] mt-[7px] grid h-[18px] w-[18px] grid-cols-2 gap-px">
                <span className="bg-[#cfc9e3]" />
                <span className="bg-[#7c6fb5]" />
                <span className="bg-[#7c6fb5]" />
                <span className="bg-[#52288f]" />
            </div>
            <div className="mt-[9px] h-px bg-[#c8c6c4]" />
            <div className="ml-[11px] mt-[9px] text-[11.500px] leading-[16px] text-[#3b3a39]">Valores</div>
            <div className="ml-[3px] mr-[6px] mt-[6px] flex h-[28px] items-center rounded-[2px] border border-dashed border-[#c8c6c4] bg-white pl-[10px] text-[11.500px] whitespace-nowrap">
                Adicionar os campos de da...
            </div>
            <div className="ml-[11px] mt-[10px] text-[11.500px] font-semibold leading-[16px] text-[#3b3a39]">Drill-through</div>
            <div className="ml-[11px] mr-[22px] mt-[9px] flex items-center justify-between text-[11.500px] leading-[16px] text-[#3b3a39]">
                <span>Relatório cruzado</span>
                <Toggle />
            </div>
            <div className="ml-[11px] mr-[22px] mt-[11px] flex items-start justify-between text-[11.500px] leading-[16px] text-[#3b3a39]">
                <span>Manter todos os<br />filtros</span>
                <Toggle on />
            </div>
            <div className="ml-[3px] mr-[6px] mt-[9px] flex h-[26px] items-center rounded-[2px] border border-dashed border-[#c8c6c4] bg-white pl-[8px] text-[11.500px] whitespace-nowrap">
                Adicionar os campos de dr...
            </div>
        </div>
    );
}

type Row = { kind: 'table'; label: string; open?: boolean } | { kind: 'field'; label: string; sum?: boolean };

const dataRows: Row[] = [
    { kind: 'table', label: 'Acessos na página' },
    { kind: 'table', label: 'Catálogo livros' },
    { kind: 'table', label: 'Clientes', open: true },
    { kind: 'field', label: 'Assinatura ativa' },
    { kind: 'field', label: 'Cidade' },
    { kind: 'field', label: 'Contato Preferi...' },
    { kind: 'field', label: 'Estado' },
    { kind: 'field', label: 'Gênero' },
    { kind: 'field', label: 'Idade', sum: true },
    { kind: 'field', label: 'Latitude', sum: true },
    { kind: 'field', label: 'Longitude', sum: true },
    { kind: 'field', label: 'Nome' },
    { kind: 'field', label: 'Profissão' },
    { kind: 'table', label: 'Número de livros ven...' },
    { kind: 'table', label: 'Vendas por semana', open: true },
    { kind: 'field', label: 'Meta de vendas', sum: true },
    { kind: 'field', label: 'Semanas', sum: true },
    { kind: 'field', label: 'Vendas', sum: true },
];

function DataPane() {
    return (
        <div className="flex min-w-0 flex-1 flex-col border-l border-[#d6d6d6] bg-[#f3f2f1] text-[#3b3a39]">
            <div className="flex h-[38px] shrink-0 items-center pl-[8px]">
                <span className="text-[15px] font-semibold text-[#252423]">Dados</span>
                <span className="ml-auto mr-[9px]"><Chevrons /></span>
            </div>
            <div className="ml-[5px] mt-[7px] flex h-[25px] w-[171px] items-center rounded-[2px] border border-[#d6d6d6] border-b-[#8a8886] bg-white pl-[9px]">
                <SearchGlyph size={14} />
                <span className="ml-[9px] text-[12px] text-[#605e5c]">Pesquisar</span>
            </div>
            <div className="mt-[9px]">
                {dataRows.map((r) =>
                    r.kind === 'table' ? (
                        <div key={r.label} className="flex h-[24px] items-center text-[11.400px] whitespace-nowrap">
                            <svg width="8" height="8" viewBox="0 0 8 8" fill="none" stroke="#605e5c" strokeWidth="0.900" className="ml-[15px]">
                                <path d={r.open ? 'M.5 2.500L4 6l3.500-3.500' : 'M2.500.5L6 4 2.500 7.500'} />
                            </svg>
                            <span className="ml-[6px] flex"><TableGlyph /></span>
                            <span className="ml-[6px]">{r.label}</span>
                        </div>
                    ) : (
                        <div key={r.label} className="flex h-[24px] items-center text-[11.400px] whitespace-nowrap">
                            <span className="ml-[44px] h-[12px] w-[12px] shrink-0 rounded-[2px] border border-[#8a8886] bg-[#f3f2f1]" />
                            <span className="ml-[8px] flex w-[12px] justify-center">{r.sum && <SigmaGlyph />}</span>
                            <span className="ml-[6px]">{r.label}</span>
                        </div>
                    ),
                )}
            </div>
        </div>
    );
}

const pages = [
    { label: 'Página 1', w: 86 },
    { label: 'Página 2', w: 87 },
    { label: 'Página 3', w: 87, active: true },
    { label: 'Página 4', w: 86 },
    { label: 'e-commerce', w: 107 },
    { label: 'vendas', w: 78 },
    { label: 'clientes', w: 81 },
];

function PageTabs() {
    return (
        <div className="flex h-[35px] shrink-0 bg-[#f3f2f1]">
            <div className="flex w-[128px] shrink-0 items-center border-r border-[#c8c6c4]">
                <div className="ml-[10px] flex w-[24px] flex-col items-center">
                    <svg width="22" height="15" viewBox="0 0 22 15"><path d="M3 1a1 1 0 0 1 1-1h14a1 1 0 0 1 1 1v11H3z" fill="#117865" /><path d="M1 13h20v1.500H1z" fill="#117865" /></svg>
                    <div className="mt-[4px] h-[3px] w-[24px] rounded-full bg-[#117865]" />
                </div>
                <svg width="12" height="22" viewBox="0 0 12 22" fill="none" stroke="#3b3a39" strokeWidth="1.200" className="ml-[26px]"><rect x=".6" y=".6" width="10.800" height="20.800" rx="1.500" /><path d="M4 18h4" /></svg>
                <svg width="6" height="9" viewBox="0 0 6 9" fill="#e6e6e6" stroke="#c8c6c4" className="ml-[22px]"><path d="M5 .5v8L1 4.500z" /></svg>
                <svg width="6" height="9" viewBox="0 0 6 9" fill="#e6e6e6" stroke="#c8c6c4" className="ml-[16px]"><path d="M1 .5v8l4-4z" /></svg>
            </div>
            {pages.map((p) => (
                <div
                    key={p.label}
                    className={`flex shrink-0 items-center justify-center border-r border-[#c8c6c4] bg-white pt-[3px] text-[11.500px] ${p.active ? 'border-b-[3px] border-b-[#117865] font-semibold text-[#252423]' : 'text-[#3b3a39]'}`}
                    style={{ width: p.w }}
                >
                    {p.label}
                </div>
            ))}
            <div className="flex w-[39px] shrink-0 items-center justify-center bg-[#117865]">
                <Plus size={15} strokeWidth={3.500} className="text-white" />
            </div>
        </div>
    );
}

function BottomStrip() {
    return (
        <div className="flex h-[3px] shrink-0">
            <div className="w-[48px] bg-[#202020]" />
            <div className="w-[239px] bg-[#f0f0f0]" />
            <div className="w-[20px] bg-[#f0a030]" />
            <div className="w-[30px] bg-[#3a3028]" />
            <div className="w-[48px] bg-[#6b6055]" />
            <div className="flex-1 bg-[#2a2622]" />
        </div>
    );
}

export default function App() {
    return (
        <div className={`relative flex h-[690px] w-[1366px] flex-col overflow-hidden bg-white ${FONT}`}>
            <ChromeBar />
            <AppHeader />
            <div className="flex min-h-0 flex-1">
                <LeftRail />
                <div className="flex min-w-0 flex-1 flex-col">
                    <Toolbar />
                    <div className="flex min-h-0 flex-1">
                        <div className="flex w-[937px] shrink-0 flex-col">
                            <div className="flex min-h-0 flex-1">
                                <div className="w-[735px] shrink-0 bg-white">
                                    <div className="ml-[219px] pt-[26px] text-[9.200px] leading-[12px] text-[#252423]">Latitude e Longitude</div>
                                    <div className="ml-[219px] mt-[2px]"><MapVisual /></div>
                                    <div className="ml-[3px] mr-[2px] mt-[47px] border-t-2 border-dotted border-[#444]" />
                                </div>
                                <FilterPane />
                            </div>
                            <PageTabs />
                        </div>
                        <VizPane />
                        <DataPane />
                    </div>
                </div>
            </div>
            <BottomStrip />
        </div>
    );
}
